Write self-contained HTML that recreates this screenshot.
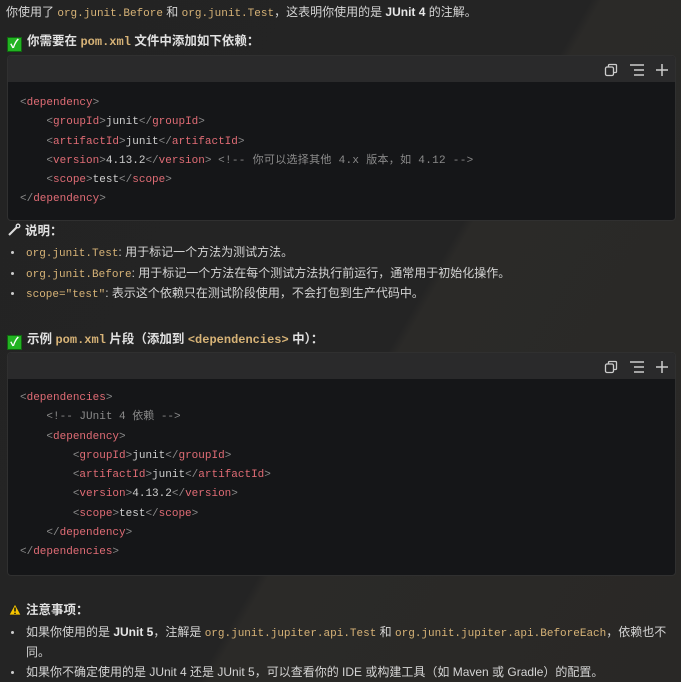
<!DOCTYPE html>
<html><head><meta charset="utf-8"><style>
*{margin:0;padding:0;box-sizing:border-box}
body{width:681px;height:682px;overflow:hidden;background:linear-gradient(120deg,#232323 0%,#242424 55%,#2b2a28 56%,#292826 100%);color:#d4d4d4;font-family:"Liberation Sans","Noto Sans CJK SC",sans-serif;font-size:12px;position:relative}
.a{position:absolute;white-space:nowrap;line-height:16px}
code,.m{font-family:"Liberation Mono","Noto Sans CJK SC",monospace;font-size:11px}
code{color:#d7b377}
b{color:#e6e6e6;font-weight:bold}
.h{font-weight:bold;color:#e0e0e0;font-size:12.5px}
.chk{display:inline-block;width:15px;height:15px;background:#22b322;border:1px solid #116611;color:#fff;font-size:12px;line-height:13px;text-align:center;vertical-align:-3px;margin-right:5px;font-weight:bold}
.blk{position:absolute;left:7px;width:669px;background:#151618;border:1px solid #303030;border-radius:4px;overflow:hidden}
.bh{height:26px;background:#2a2a2b;position:relative}
.ic{position:absolute;top:7px}
.code{padding:12px 0 0 12px;font-family:"Liberation Mono","Noto Sans CJK SC",monospace;font-size:11px;line-height:19.3px;color:#cfcfcf;white-space:pre}
.t{color:#e06c75}.c{color:#8a8a8a}
.dot{position:absolute;left:11px;width:3px;height:3px;border-radius:50%;background:#ccc}
</style></head><body>
<div class="a" style="left:6px;top:4px">你使用了 <code>org.junit.Before</code> 和 <code>org.junit.Test</code>，这表明你使用的是 <b>JUnit 4</b> 的注解。</div>
<div class="a h" style="left:7px;top:33px"><span class="chk">✓</span>你需要在 <code style="font-size:12px">pom.xml</code> 文件中添加如下依赖：</div>

<div class="blk" style="top:55px;height:166px">
<div class="bh">
<svg class="ic" style="left:596px" width="14" height="14" viewBox="0 0 14 14" fill="none" stroke="#ccc" stroke-width="1.3"><rect x="1.5" y="4" width="8" height="8.5" rx="1.5"/><path d="M4.5 3.5V2.5a1 1 0 0 1 1-1h6a1 1 0 0 1 1 1v6a1 1 0 0 1-1 1h-1.5"/></svg>
<svg class="ic" style="left:621px" width="16" height="14" viewBox="0 0 16 14" stroke="#ccc" stroke-width="1.5"><path d="M1 2h14M5 7h10M5 12h10"/></svg>
<svg class="ic" style="left:647px" width="14" height="14" viewBox="0 0 14 14" stroke="#ccc" stroke-width="1.5"><path d="M7 1v12M1 7h12"/></svg>
</div>
<div class="code"><span class="c">&lt;</span><span class="t">dependency</span><span class="c">&gt;</span>
    <span class="c">&lt;</span><span class="t">groupId</span><span class="c">&gt;</span>junit<span class="c">&lt;/</span><span class="t">groupId</span><span class="c">&gt;</span>
    <span class="c">&lt;</span><span class="t">artifactId</span><span class="c">&gt;</span>junit<span class="c">&lt;/</span><span class="t">artifactId</span><span class="c">&gt;</span>
    <span class="c">&lt;</span><span class="t">version</span><span class="c">&gt;</span>4.13.2<span class="c">&lt;/</span><span class="t">version</span><span class="c">&gt;</span> <span class="c" style="letter-spacing:0.3px">&lt;!-- 你可以选择其他 4.x 版本，如 4.12 --&gt;</span>
    <span class="c">&lt;</span><span class="t">scope</span><span class="c">&gt;</span>test<span class="c">&lt;/</span><span class="t">scope</span><span class="c">&gt;</span>
<span class="c">&lt;/</span><span class="t">dependency</span><span class="c">&gt;</span></div>
</div>

<div class="a h" style="left:7px;top:223px"><svg width="14" height="14" viewBox="0 0 14 14" style="vertical-align:-2px;margin-right:4px" stroke="#ddd" stroke-width="2" fill="none"><path d="M2 12L10 4"/><circle cx="11" cy="3" r="1.8" stroke-width="1.3"/></svg>说明：</div>
<div class="dot" style="top:251px"></div><div class="a" style="left:26px;top:244px"><code>org.junit.Test</code>: 用于标记一个方法为测试方法。</div>
<div class="dot" style="top:272px"></div><div class="a" style="left:26px;top:265px"><code>org.junit.Before</code>: 用于标记一个方法在每个测试方法执行前运行，通常用于初始化操作。</div>
<div class="dot" style="top:292px"></div><div class="a" style="left:26px;top:285px"><code>scope="test"</code>: 表示这个依赖只在测试阶段使用，不会打包到生产代码中。</div>

<div class="a h" style="left:7px;top:331px"><span class="chk">✓</span>示例 <code style="font-size:12px">pom.xml</code> 片段（添加到 <code style="font-size:12px">&lt;dependencies&gt;</code> 中）：</div>

<div class="blk" style="top:352px;height:224px">
<div class="bh">
<svg class="ic" style="left:596px" width="14" height="14" viewBox="0 0 14 14" fill="none" stroke="#ccc" stroke-width="1.3"><rect x="1.5" y="4" width="8" height="8.5" rx="1.5"/><path d="M4.5 3.5V2.5a1 1 0 0 1 1-1h6a1 1 0 0 1 1 1v6a1 1 0 0 1-1 1h-1.5"/></svg>
<svg class="ic" style="left:621px" width="16" height="14" viewBox="0 0 16 14" stroke="#ccc" stroke-width="1.5"><path d="M1 2h14M5 7h10M5 12h10"/></svg>
<svg class="ic" style="left:647px" width="14" height="14" viewBox="0 0 14 14" stroke="#ccc" stroke-width="1.5"><path d="M7 1v12M1 7h12"/></svg>
</div>
<div class="code" style="padding-top:10px"><span class="c">&lt;</span><span class="t">dependencies</span><span class="c">&gt;</span>
    <span class="c">&lt;!-- JUnit 4 依赖 --&gt;</span>
    <span class="c">&lt;</span><span class="t">dependency</span><span class="c">&gt;</span>
        <span class="c">&lt;</span><span class="t">groupId</span><span class="c">&gt;</span>junit<span class="c">&lt;/</span><span class="t">groupId</span><span class="c">&gt;</span>
        <span class="c">&lt;</span><span class="t">artifactId</span><span class="c">&gt;</span>junit<span class="c">&lt;/</span><span class="t">artifactId</span><span class="c">&gt;</span>
        <span class="c">&lt;</span><span class="t">version</span><span class="c">&gt;</span>4.13.2<span class="c">&lt;/</span><span class="t">version</span><span class="c">&gt;</span>
        <span class="c">&lt;</span><span class="t">scope</span><span class="c">&gt;</span>test<span class="c">&lt;/</span><span class="t">scope</span><span class="c">&gt;</span>
    <span class="c">&lt;/</span><span class="t">dependency</span><span class="c">&gt;</span>
<span class="c">&lt;/</span><span class="t">dependencies</span><span class="c">&gt;</span></div>
</div>

<div class="a h" style="left:8px;top:602px"><svg width="14" height="13" viewBox="0 0 14 13" style="vertical-align:-2px;margin-right:4px"><path d="M7 1L13 12H1Z" fill="#f5c400" stroke="#222" stroke-width=".8"/><path d="M7 4.5v4M7 9.8v1.2" stroke="#111" stroke-width="1.5"/></svg>注意事项：</div>
<div class="dot" style="top:631px"></div><div class="a" style="left:26px;top:624px">如果你使用的是 <b>JUnit 5</b>，注解是 <code>org.junit.jupiter.api.Test</code> 和 <code>org.junit.jupiter.api.BeforeEach</code>，依赖也不</div>
<div class="a" style="left:26px;top:644px">同。</div>
<div class="dot" style="top:671px"></div><div class="a" style="left:26px;top:664px">如果你不确定使用的是 JUnit 4 还是 JUnit 5，可以查看你的 IDE 或构建工具（如 Maven 或 Gradle）的配置。</div>
</body></html>
